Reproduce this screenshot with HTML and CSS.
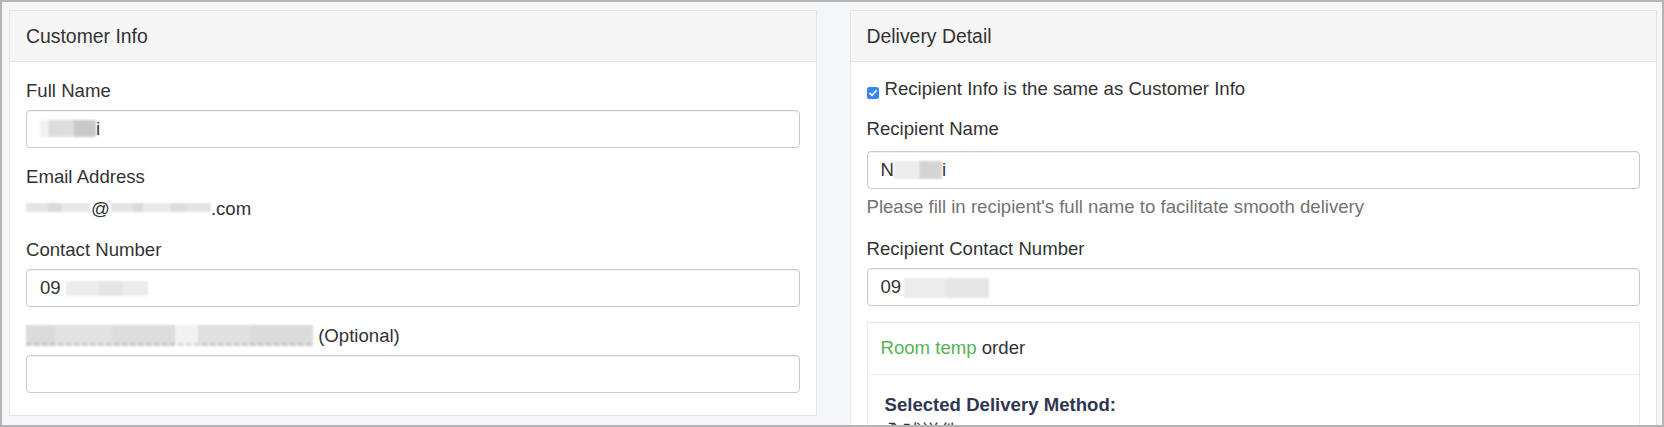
FILE: index.html
```html
<!DOCTYPE html>
<html lang="en">
<head>
<meta charset="utf-8">
<title>Checkout</title>
<link rel="stylesheet" href="styles.css">
</head>
<body>
<div class="frame">
  <section class="panel">
    <div class="panel-heading">Customer Info</div>
    <div class="panel-body">
      <div class="form-group">
        <div class="label">Full Name</div>
        <div class="form-control"><span class="blur bn-a"></span><span class="blur bn-b"></span><span class="blur bn-c"></span>i</div>
      </div>
      <div class="form-group tight">
        <div class="label">Email Address</div>
        <div class="static"><span class="blur be-a"></span>@<span class="blur be-b"></span>.com</div>
      </div>
      <div class="form-group">
        <div class="label">Contact Number</div>
        <div class="form-control">09<span class="blur bp"></span></div>
      </div>
      <div class="form-group">
        <div class="label"><span class="blur bo"></span> (Optional)</div>
        <div class="form-control"></div>
      </div>
    </div>
  </section>

  <section class="panel">
    <div class="panel-heading">Delivery Detail</div>
    <div class="panel-body">
      <div class="check-row">
        <svg class="cb" width="12" height="12" viewBox="0 0 12 12" aria-hidden="true"><rect width="12" height="12" rx="2.6" fill="#3a85f6"/><path d="M3 6.3 L5.1 8.3 L9.1 3.7" stroke="#fff" stroke-width="1.7" fill="none" stroke-linecap="round" stroke-linejoin="round"/></svg>
        <span>Recipient Info is the same as Customer Info</span>
      </div>
      <div class="form-group">
        <div class="label label-r">Recipient Name</div>
        <div class="form-control">N<span class="blur br-a"></span><span class="blur br-b"></span>i</div>
        <div class="help">Please fill in recipient's full name to facilitate smooth delivery</div>
      </div>
      <div class="form-group">
        <div class="label">Recipient Contact Number</div>
        <div class="form-control">09<span class="blur brp"></span></div>
      </div>
      <div class="inner">
        <div class="inner-heading"><span class="green">Room temp</span> order</div>
        <div class="inner-body">
          <div class="method-title">Selected Delivery Method:</div>
          <div class="method-name">全球送件</div>
        </div>
      </div>
    </div>
  </section>
</div>
</body>
</html>
```

FILE: styles.css
```css
html, body {
  margin: 0;
  padding: 0;
}

body {
  font-family: "Liberation Sans", Arial, "Noto Sans CJK TC", sans-serif;
  font-size: 18.6px;
  line-height: 26px;
  color: #333;
}

.frame {
  box-sizing: border-box;
  height: 427px;
  border: 2px solid #b4b4b7;
  background: #f5f6f8;
  overflow: hidden;
  display: flex;
  align-items: flex-start;
  gap: 33px;
  padding: 8px 5px 0 7px;
}

.panel {
  flex: 1;
  min-width: 0;
  background: #fff;
  border: 1px solid #e5e5e5;
}

.panel-heading {
  background: #f5f5f5;
  border-bottom: 1px solid #e5e5e5;
  padding: 12px 16px;
  font-size: 19.4px;
  line-height: 26px;
  color: #333;
}

.panel-body {
  padding: 16px 16px 6px;
}

.form-group {
  margin-bottom: 16px;
}

.form-group.tight {
  margin-bottom: 15px;
}

.label {
  margin-bottom: 6px;
  white-space: nowrap;
}

.label-r {
  margin-bottom: 9px;
}

.static {
  white-space: nowrap;
}

.form-control {
  box-sizing: border-box;
  height: 38px;
  border: 1px solid #c9c9c9;
  border-radius: 4px;
  box-shadow: inset 0 1px 1px rgba(0, 0, 0, 0.06);
  padding: 0 13px;
  line-height: 36px;
  color: #333;
  white-space: nowrap;
  background: #fff;
}

.help {
  margin-top: 5px;
  color: #737373;
}

.check-row {
  display: flex;
  align-items: flex-start;
  gap: 6px;
  margin-top: -2px;
  margin-bottom: 14px;
}

.cb {
  margin-top: 11px;
  flex: none;
}

/* redacted (blurred) text areas */
.blur {
  display: inline-block;
  filter: blur(0.8px);
}

.bn-a { width: 8px; height: 17px; background: #f1f1f1; vertical-align: -2px; }
.bn-b { width: 25px; height: 17px; background: #dddddd; vertical-align: -2px; }
.bn-c { width: 23px; height: 17px; background: #c9c9c9; vertical-align: -2px; }

.be-a {
  width: 64px; height: 9px; vertical-align: 3px;
  background: linear-gradient(90deg, #e4e4e4 0 35%, #dadada 35% 55%, #e6e6e6 55% 100%);
  margin-right: 1px;
}
.be-b {
  width: 100px; height: 9px; vertical-align: 3px;
  background: linear-gradient(90deg, #e4e4e4 0 22%, #dadada 22% 32%, #e8e8e8 32% 60%, #dcdcdc 60% 75%, #e4e4e4 75% 100%);
  margin-left: 1px;
}

.bp {
  width: 82px; height: 15px; vertical-align: -2px; margin-left: 5px;
  background: linear-gradient(90deg, #ececec 0 40%, #e4e4e4 40% 70%, #ececec 70% 100%);
}

.bo {
  width: 287px; height: 21px; vertical-align: -4px;
  background:
    repeating-linear-gradient(90deg, rgba(110, 110, 110, 0.18) 0 5px, transparent 5px 8px) bottom / 100% 3px no-repeat,
    linear-gradient(90deg, #dadada 0 10%, #e2e2e2 10% 30%, #dcdcdc 30% 52%, #f2f2f2 52% 60%, #e0e0e0 60% 78%, #dbdbdb 78% 100%);
}

.br-a { width: 25px; height: 18px; background: #ececec; vertical-align: -3px; }
.br-b { width: 23px; height: 18px; background: #d4d4d4; vertical-align: -3px; }

.brp {
  width: 85px; height: 20px; vertical-align: -5px; margin-left: 3px;
  background: linear-gradient(90deg, #ececec 0 50%, #e6e6e6 50% 100%);
}

.inner {
  margin-top: 1px;
  border: 1px solid #e8e8e8;
}

.inner-heading {
  padding: 12px 13px 13px;
  border-bottom: 1px solid #ececec;
}

.green {
  color: #56b356;
}

.inner-body {
  padding: 17px 17px;
}

.method-title {
  font-weight: bold;
  color: #2f3750;
}

.method-name {
  font-family: "Noto Sans CJK TC", "Liberation Sans", sans-serif;
  line-height: 24px;
  color: #333;
}
```
